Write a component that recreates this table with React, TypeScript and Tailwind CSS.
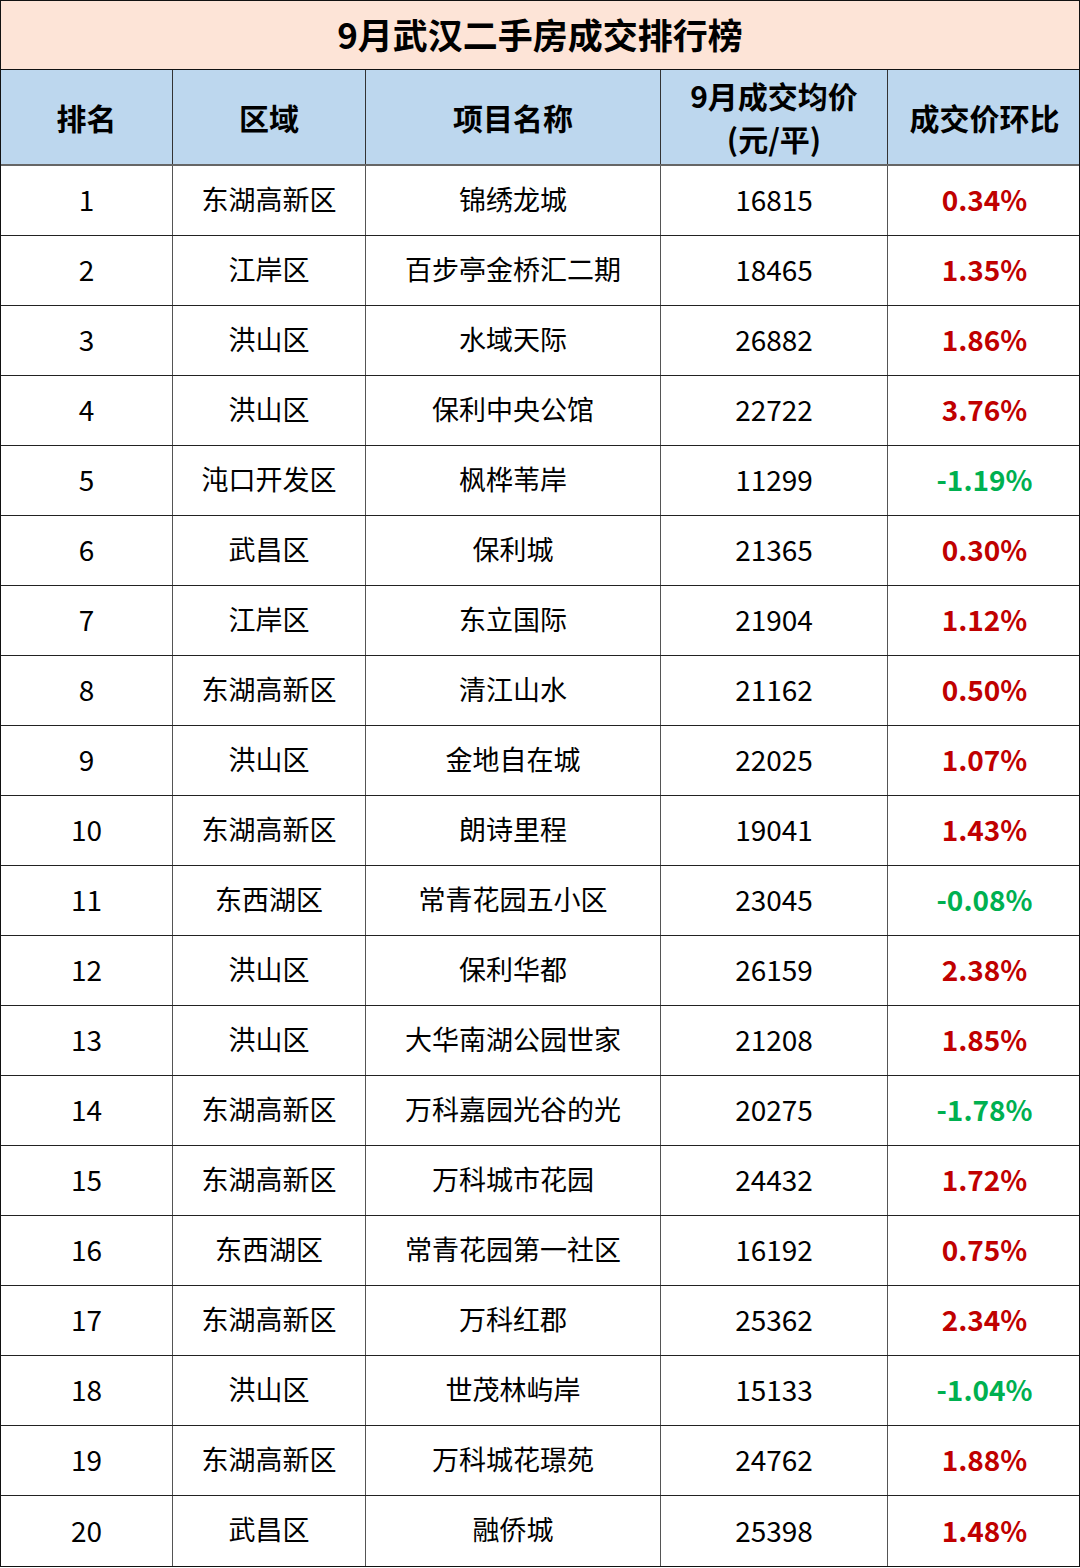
const rows: [number, string, string, string, string][] = [
  [1, "东湖高新区", "锦绣龙城", "16815", "0.34%"],
  [2, "江岸区", "百步亭金桥汇二期", "18465", "1.35%"],
  [3, "洪山区", "水域天际", "26882", "1.86%"],
  [4, "洪山区", "保利中央公馆", "22722", "3.76%"],
  [5, "沌口开发区", "枫桦苇岸", "11299", "-1.19%"],
  [6, "武昌区", "保利城", "21365", "0.30%"],
  [7, "江岸区", "东立国际", "21904", "1.12%"],
  [8, "东湖高新区", "清江山水", "21162", "0.50%"],
  [9, "洪山区", "金地自在城", "22025", "1.07%"],
  [10, "东湖高新区", "朗诗里程", "19041", "1.43%"],
  [11, "东西湖区", "常青花园五小区", "23045", "-0.08%"],
  [12, "洪山区", "保利华都", "26159", "2.38%"],
  [13, "洪山区", "大华南湖公园世家", "21208", "1.85%"],
  [14, "东湖高新区", "万科嘉园光谷的光", "20275", "-1.78%"],
  [15, "东湖高新区", "万科城市花园", "24432", "1.72%"],
  [16, "东西湖区", "常青花园第一社区", "16192", "0.75%"],
  [17, "东湖高新区", "万科红郡", "25362", "2.34%"],
  [18, "洪山区", "世茂林屿岸", "15133", "-1.04%"],
  [19, "东湖高新区", "万科城花璟苑", "24762", "1.88%"],
  [20, "武昌区", "融侨城", "25398", "1.48%"],
];

const cols = "grid grid-cols-[172px_193px_295px_227px_193px]";
const font = { fontFamily: '"Noto Sans CJK SC", "Noto Sans", sans-serif' };

export default function App() {
  return (
    <div className="w-[1080px] h-[1568px] bg-white text-black" style={font}>
      <div className="border border-[#111] w-[1080px]">
        {/* 标题 */}
        <div className="h-[69px] bg-[#fde4d7] flex items-center justify-center text-[35px] font-bold border-b border-[#111] pb-[2px]">
          9月武汉二手房成交排行榜
        </div>
        {/* 表头 */}
        <div className={`${cols} h-[96px] bg-[#bdd7ee] border-b-2 border-[#666] text-[30px] font-bold`}>
          <div className="flex items-center justify-center border-r border-[#333]">排名</div>
          <div className="flex items-center justify-center border-r border-[#333]">区域</div>
          <div className="flex items-center justify-center border-r border-[#333]">项目名称</div>
          <div className="flex flex-col items-center justify-center border-r border-[#333] leading-[43px]">
            <span>9月成交均价</span>
            <span>(元/平)</span>
          </div>
          <div className="flex items-center justify-center">成交价环比</div>
        </div>
        {/* 数据 */}
        {rows.map(([rank, area, name, price, chg], i) => (
          <div
            key={rank}
            className={`${cols} h-[70px] text-[27px] ${i < rows.length - 1 ? "border-b border-[#222]" : ""}`}
          >
            <div className="flex items-center justify-center border-r border-[#555] text-[28px] pb-[3px]">{rank}</div>
            <div className="flex items-center justify-center border-r border-[#555] pb-[3px]">{area}</div>
            <div className="flex items-center justify-center border-r border-[#555] pb-[3px]">{name}</div>
            <div className="flex items-center justify-center border-r border-[#555] text-[28px] pb-[3px]">{price}</div>
            <div
              className={`flex items-center justify-center font-bold text-[28px] pb-[3px] ${chg.startsWith("-") ? "text-[#00b050]" : "text-[#c00000]"}`}
            >
              {chg}
            </div>
          </div>
        ))}
      </div>
    </div>
  );
}
